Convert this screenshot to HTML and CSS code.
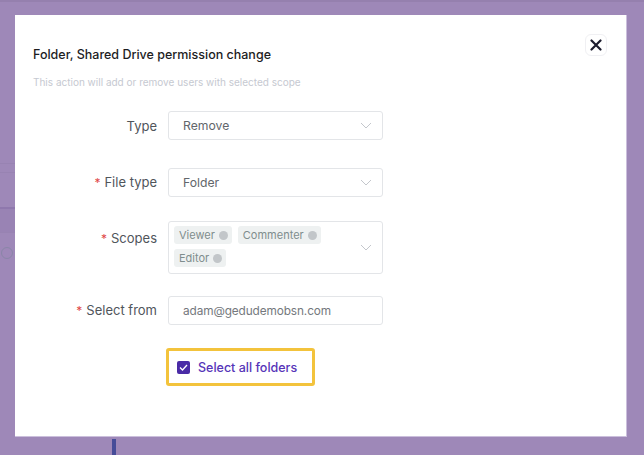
FILE: index.html
```html
<!DOCTYPE html>
<html lang="en">
<head>
    <meta charset="UTF-8">
    <title>Permission change</title>
    <link rel="stylesheet" href="styles.css">
</head>
<body>
    <!-- page behind the overlay -->
    <div class="page-behind">
        <div class="bg-line l1"></div>
        <div class="bg-line l2"></div>
        <div class="bg-band"></div>
        <div class="bg-line l3"></div>
        <div class="bg-search"></div>
        <div class="bg-bar"></div>
    </div>

    <div class="modal">
        <button class="close-btn" aria-label="Close">
            <svg width="12" height="12" viewBox="0 0 12 12">
                <path d="M1.5 1.5 L10.5 10.5 M10.5 1.5 L1.5 10.5" stroke="#1c1c2e" stroke-width="2.2" stroke-linecap="round"/>
            </svg>
        </button>

        <div class="modal-title">Folder, Shared Drive permission change</div>
        <div class="modal-subtitle">This action will add or remove users with selected scope</div>

        <div class="form">
            <div class="form-row row-type">
                <label class="form-label">Type</label>
                <div class="select">
                    <span class="select-value">Remove</span>
                    <svg class="chevron" width="12" height="7" viewBox="0 0 12 7"><path d="M1 1 L6 6 L11 1" fill="none" stroke="#c4c7cc" stroke-width="1"/></svg>
                </div>
            </div>

            <div class="form-row row-filetype">
                <label class="form-label"><span class="req">*</span>File type</label>
                <div class="select">
                    <span class="select-value">Folder</span>
                    <svg class="chevron" width="12" height="7" viewBox="0 0 12 7"><path d="M1 1 L6 6 L11 1" fill="none" stroke="#c4c7cc" stroke-width="1"/></svg>
                </div>
            </div>

            <div class="form-row row-scopes">
                <label class="form-label"><span class="req">*</span>Scopes</label>
                <div class="select multi">
                    <div class="tags">
                        <span class="tag">Viewer <i class="tag-x"></i></span>
                        <span class="tag">Commenter <i class="tag-x"></i></span>
                        <span class="tag">Editor <i class="tag-x"></i></span>
                    </div>
                    <svg class="chevron" width="12" height="7" viewBox="0 0 12 7"><path d="M1 1 L6 6 L11 1" fill="none" stroke="#c4c7cc" stroke-width="1"/></svg>
                </div>
            </div>

            <div class="form-row row-from">
                <label class="form-label"><span class="req">*</span>Select from</label>
                <div class="select">
                    <span class="select-value email">adam@gedudemobsn.com</span>
                </div>
            </div>

            <div class="form-row row-check">
                <span></span>
                <div class="check-highlight">
                    <span class="checkbox">
                        <svg width="9" height="7" viewBox="0 0 9 7"><path d="M1 3.5 L3.5 6 L8 1" fill="none" stroke="#fff" stroke-width="1.3"/></svg>
                    </span>
                    <span class="check-label">Select all folders</span>
                </div>
            </div>
        </div>
    </div>
</body>
</html>
```

FILE: styles.css
```css
* {
    margin: 0;
    padding: 0;
    box-sizing: border-box;
}

body {
    font-family: Inter, 'Noto Sans', sans-serif;
    background: #9e88b8;
    width: 644px;
    height: 455px;
    overflow: hidden;
    position: relative;
    padding: 15px 17px 18px 15px;
}

/* faint page under the overlay */
.page-behind {
    position: absolute;
    inset: 0;
    border-top: 2px solid #9580ae;
}

.bg-line {
    position: absolute;
    left: 0;
    width: 15px;
    height: 1px;
    background: #9883b2;
}

.l1 { top: 161px; }
.l2 { top: 170px; }
.l3 { top: 230px; }

.bg-band {
    position: absolute;
    left: 0;
    top: 205px;
    width: 15px;
    height: 25px;
    background: #9983b4;
    border-top: 2px solid #8f78ad;
}

.bg-search {
    position: absolute;
    left: 1px;
    top: 245px;
    width: 12px;
    height: 12px;
    border: 1px solid #8a86a8;
    border-radius: 50%;
}

.bg-bar {
    position: absolute;
    left: 112px;
    top: 437px;
    width: 4px;
    height: 18px;
    background: #464c98;
}

.modal {
    position: relative;
    width: 612px;
    height: 422px;
    background: #fff;
    border: 1px solid #cbbfdc;
    border-left: none;
    border-top: none;
}

.close-btn {
    position: absolute;
    top: 19px;
    right: 19px;
    width: 22px;
    height: 22px;
    border: 1px solid #f0f0f3;
    border-radius: 6px;
    background: #fff;
    display: flex;
    align-items: center;
    justify-content: center;
}

.modal-title {
    padding: 31px 0 0 18px;
    font-size: 12.5px;
    font-weight: 500;
    line-height: 18px;
    color: #1d1d1f;
}

.modal-subtitle {
    padding: 11px 0 0 18px;
    font-size: 10px;
    line-height: 14px;
    color: #c6c9d1;
}

.form {
    padding-top: 22px;
    display: flex;
    flex-direction: column;
}

.form-row {
    display: grid;
    grid-template-columns: 142px 215px;
    column-gap: 11px;
    align-items: center;
}

.row-filetype { margin-top: 28px; }
.row-scopes { margin-top: 24px; align-items: start; }
.row-from { margin-top: 22px; }
.row-check { margin-top: 23px; }

.row-scopes .form-label {
    padding-top: 8px;
}

.form-label {
    text-align: right;
    font-size: 13px;
    line-height: 18px;
    color: #50555b;
}

.req {
    color: #e04848;
    margin-right: 4px;
    font-size: 12px;
}

.select {
    height: 29px;
    border: 1px solid #e3e5e8;
    border-radius: 3px;
    display: flex;
    align-items: center;
    justify-content: space-between;
    padding: 0 10px 0 14px;
}

.select-value {
    font-size: 12.2px;
    color: #62666b;
}

.select-value.email {
    font-size: 11.8px;
    letter-spacing: -0.1px;
    color: #74787d;
}

.select.multi {
    height: 53px;
    padding: 4px 10px 4px 5px;
    align-items: flex-start;
}

.select.multi .chevron {
    margin-top: 18px;
}

.tags {
    display: flex;
    flex-wrap: wrap;
    gap: 5px 6px;
    width: 160px;
}

.tag {
    display: inline-flex;
    align-items: center;
    height: 18px;
    padding: 0 4px 0 5px;
    background: #eef1f1;
    border-radius: 3px;
    font-size: 11px;
    color: #7f8d8d;
}

.tag-x {
    display: inline-block;
    width: 9px;
    height: 9px;
    margin-left: 4px;
    border-radius: 50%;
    background: #c2c6c9;
}

.check-highlight {
    margin-left: -2px;
    width: 149px;
    height: 38px;
    border: 3px solid #f3c33c;
    border-radius: 3px;
    display: flex;
    align-items: center;
    padding-left: 8px;
    gap: 8px;
}

.checkbox {
    width: 13px;
    height: 13px;
    border-radius: 2px;
    background: #4a2ba6;
    display: flex;
    align-items: center;
    justify-content: center;
}

.check-label {
    font-size: 12.5px;
    font-weight: 500;
    color: #5634b8;
}
```
